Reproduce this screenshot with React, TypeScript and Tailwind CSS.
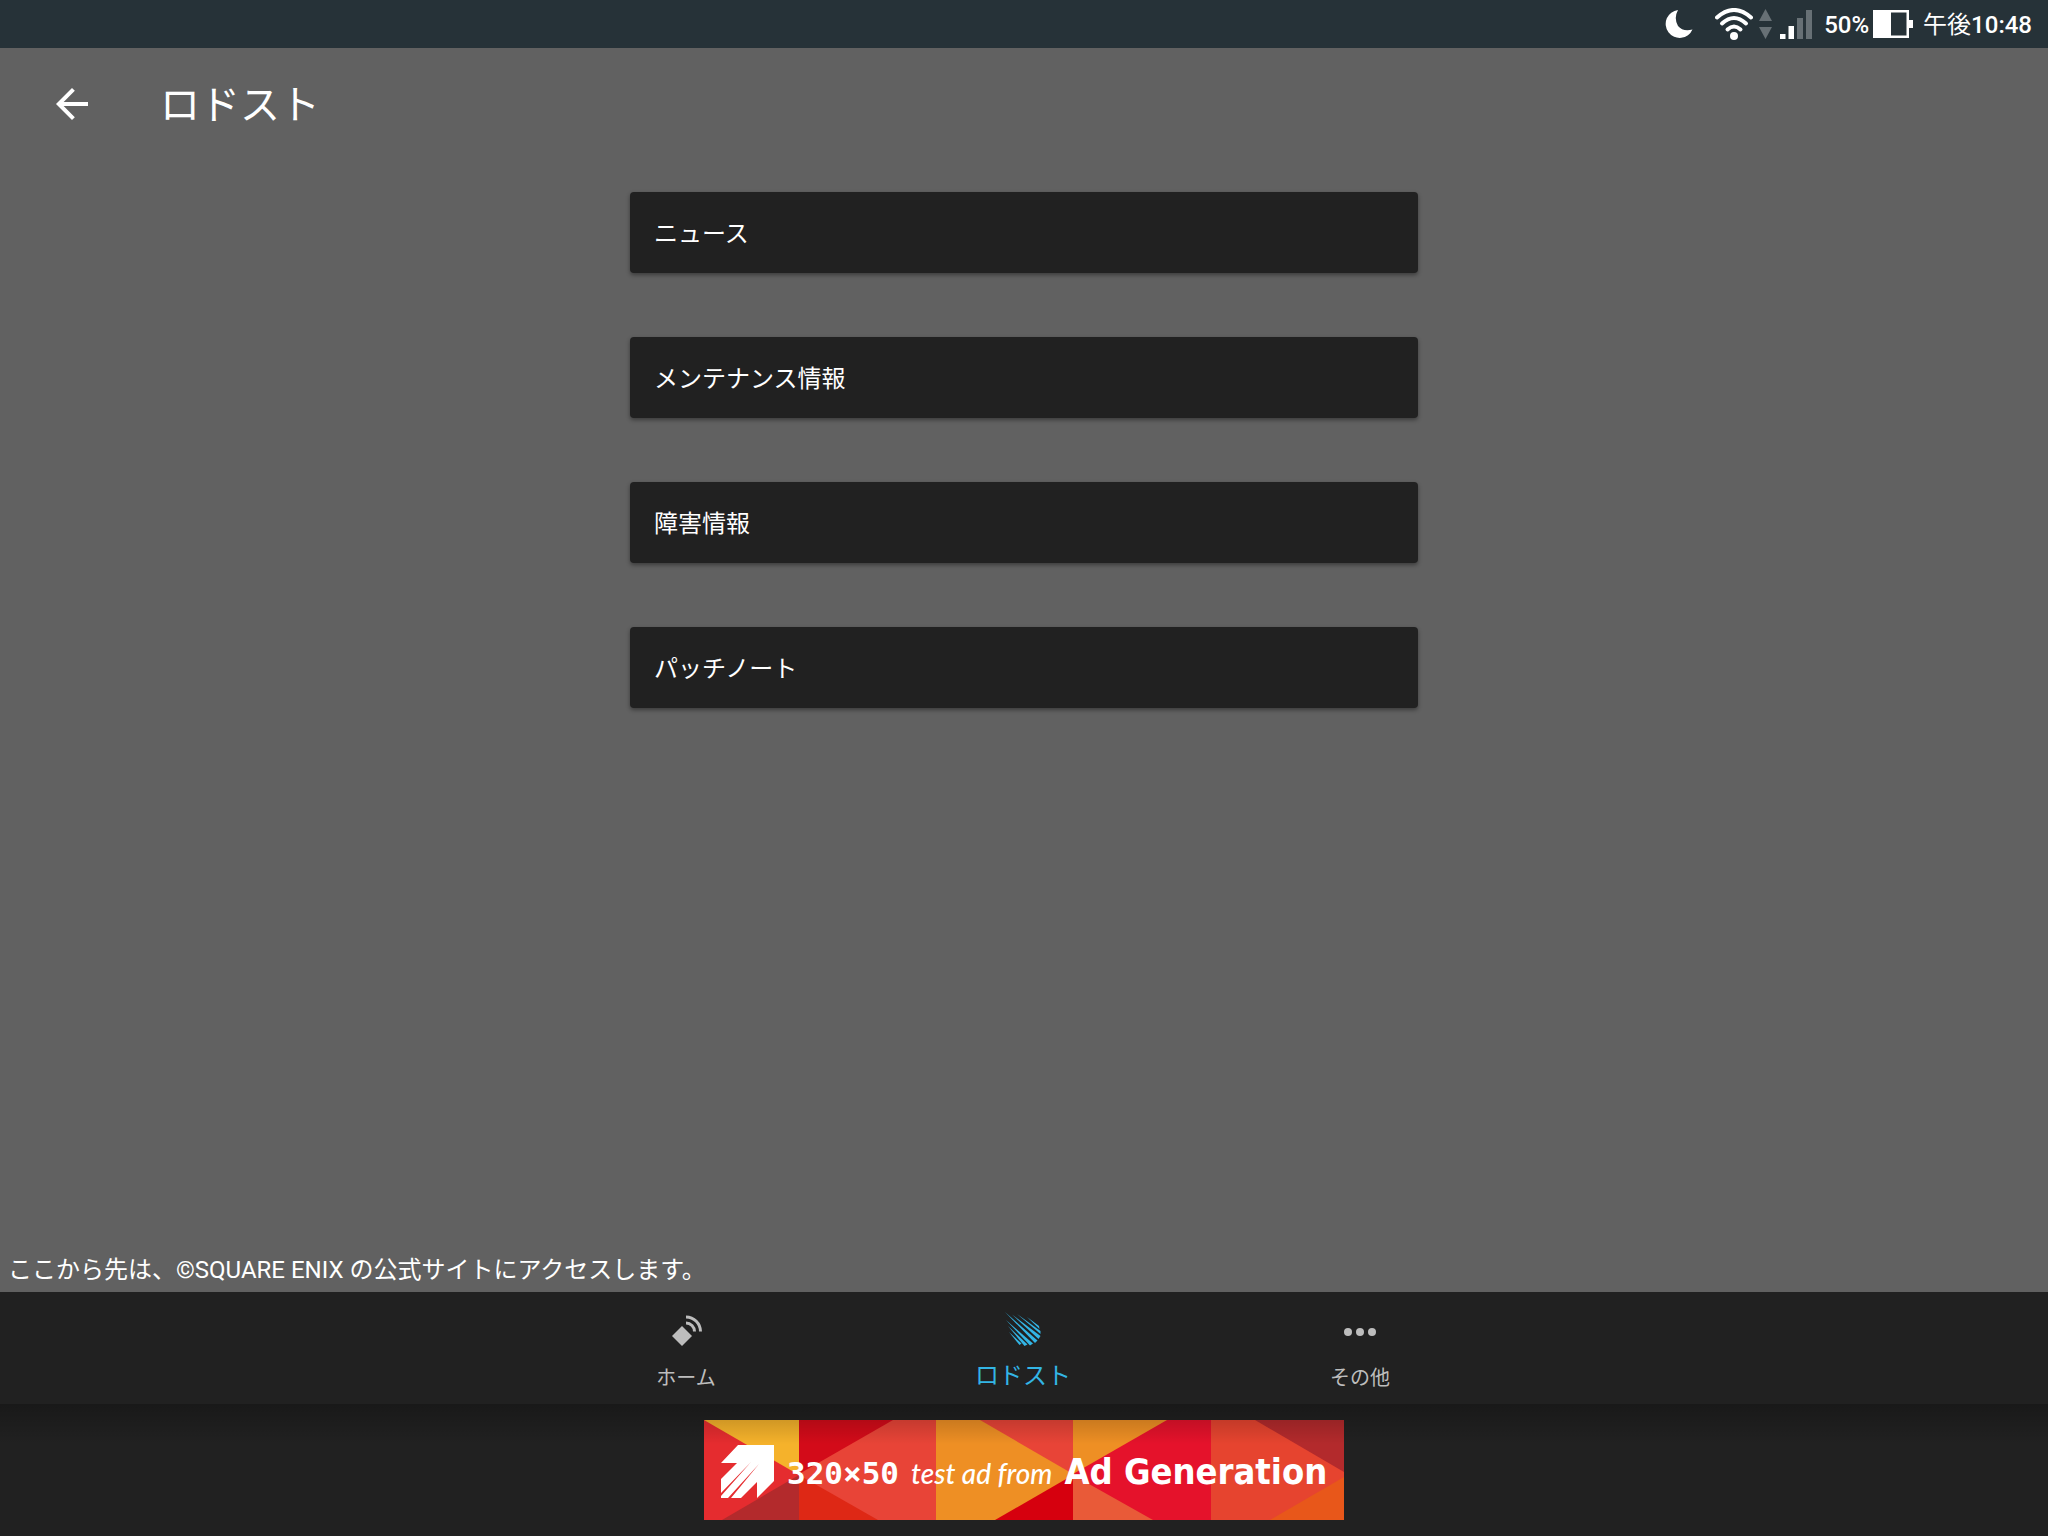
import React from "react";
import clsx from "clsx";

interface NavItem {
  label: string;
  icon: React.ReactNode;
  active?: boolean;
}

const LINKS = ["ニュース", "メンテナンス情報", "障害情報", "パッチノート"];

function MoonIcon() {
  return (
    <svg viewBox="0 0 28 28" className="size-7" fill="#fff">
      <path d="M13 0A14 14 0 1 0 27.500 19.500Q18 22 13 16Q8.500 8 13 0Z" />
    </svg>
  );
}

function WifiIcon() {
  return (
    <svg viewBox="0 0 38 32" className="h-8 w-[38px]" fill="none" stroke="#fff" strokeWidth="4" strokeLinecap="round">
      <path d="M2 9.500Q19 -5.500 36 9.500" />
      <path d="M7 15.500Q19 4.500 31 15.500" />
      <path d="M12.500 21.500Q19 15.500 25.500 21.500" />
      <circle cx="19" cy="28" r="4" fill="#fff" stroke="none" />
    </svg>
  );
}

function TrafficIcon() {
  return (
    <svg viewBox="0 0 13 30" className="h-[30px] w-[13px]" fill="#677075">
      <path d="M6.500 0L13 12H0ZM0 18H13L6.500 30Z" />
    </svg>
  );
}

function SignalIcon() {
  return (
    <svg viewBox="0 0 32 29" className="h-[29px] w-8">
      <path d="M0 24H5.500V29H0ZM8.500 16H14V29H8.500Z" fill="#fff" />
      <path d="M17 8H23V29H17ZM26 0H32V29H26Z" fill="#677075" />
    </svg>
  );
}

function BatteryIcon() {
  return (
    <svg viewBox="0 0 40 28" className="h-7 w-10" fill="#fff">
      <path fillRule="evenodd" d="M0 0H36V10H40V18H36V28H0ZM18 2.500V25.500H33.500V2.500Z" />
    </svg>
  );
}

function BackIcon() {
  return (
    <svg viewBox="4 4 16 16" className="size-8" fill="#fff">
      <path d="M20 11H7.830l5.590-5.590L12 4l-8 8 8 8 1.410-1.410L7.830 13H20z" />
    </svg>
  );
}

function HomeIcon() {
  return (
    <svg viewBox="0 0 36 36" className="size-9" fill="none" stroke="#bdbdbd" strokeWidth="3">
      <path d="M14 12L24 22L14 32L4 22Z" fill="#bdbdbd" stroke="none" />
      <path d="M18 9A8.500 8.500 0 0 1 26.500 17.500" />
      <path d="M18 3A14.500 14.500 0 0 1 32.500 17.500" />
    </svg>
  );
}

function MeteorIcon() {
  return (
    <svg viewBox="0 0 36 36" className="size-9" fill="#33b5e5">
      <path d="M22 5L34 14L34.500 17Z" />
      <path d="M12 2L35.500 19L35.500 22Z" />
      <path d="M7 2.500L35.500 24L33.500 27Z" />
      <path d="M0 0L32.500 28.500L30 31Z" />
      <path d="M1 8L28 31.500L25 33.500Z" />
      <path d="M3 14L22.500 32.500L19.500 34Z" />
      <path d="M4 20L16.500 31.500L14.500 33Z" />
    </svg>
  );
}

function MoreIcon() {
  return (
    <svg viewBox="0 0 36 36" className="size-9" fill="#bdbdbd">
      <circle cx="6" cy="18" r="4" />
      <circle cx="18" cy="18" r="4" />
      <circle cx="30" cy="18" r="4" />
    </svg>
  );
}

const NAV_ITEMS: NavItem[] = [
  { label: "ホーム", icon: <HomeIcon /> },
  { label: "ロドスト", icon: <MeteorIcon />, active: true },
  { label: "その他", icon: <MoreIcon /> },
];

function StatusBar() {
  return (
    <div className="flex h-12 items-center justify-end bg-[#263238] pr-4 text-2xl leading-8">
      <MoonIcon />
      <div className="ml-[22px] flex items-center gap-1.5">
        <WifiIcon />
        <TrafficIcon />
      </div>
      <div className="ml-2">
        <SignalIcon />
      </div>
      <span className="ml-3 pt-0.5 font-medium">50%</span>
      <div className="ml-1">
        <BatteryIcon />
      </div>
      <time className="ml-2.5 pt-0.5">
        午後<span className="font-medium">10:48</span>
      </time>
    </div>
  );
}

function BottomNav() {
  return (
    <nav className="flex h-28 justify-center bg-[#212121] pr-0.5">
      {NAV_ITEMS.map(({ label, icon, active }) => (
        <button
          key={label}
          className={clsx(
            "flex w-full max-w-[337px] flex-col items-center",
            active ? "pt-5 text-2xl text-[#33b5e5]" : "pt-[22px] text-xl text-[#bdbdbd]",
          )}
        >
          {icon}
          <span className="mt-2.5 leading-9">{label}</span>
        </button>
      ))}
    </nav>
  );
}

function AdBackground() {
  return (
    <svg viewBox="0 0 640 100" className="absolute inset-0 size-full" preserveAspectRatio="none">
      <path d="M0 0H95V100H0Z" fill="#e52c2f" />
      <path d="M0 0H95V55Z" fill="#f5b22b" />
      <path d="M95 55V100H18Z" fill="#b32a2c" />
      <path d="M95 0H232V100H95Z" fill="#e84437" />
      <path d="M95 0H189L95 54Z" fill="#d30b19" />
      <path d="M95 55L174 100H95Z" fill="#de2815" />
      <path d="M232 0H369V100H232Z" fill="#ee8f24" />
      <path d="M276 0H369V54Z" fill="#e84437" />
      <path d="M369 55V100H291Z" fill="#d6000e" />
      <path d="M369 0H507V100H369Z" fill="#e5122b" />
      <path d="M369 0H463L369 54Z" fill="#ee8f24" />
      <path d="M369 55L449 100H369Z" fill="#e95a38" />
      <path d="M507 0H640V100H507Z" fill="#e6442f" />
      <path d="M551 0H640V52Z" fill="#b32a2c" />
      <path d="M640 57V100H566Z" fill="#e8571a" />
    </svg>
  );
}

function AdLogo() {
  return (
    <svg viewBox="0 0 54 54" className="size-[54px] shrink-0" fill="#fff">
      <path
        fillRule="evenodd"
        d="M17 0H53V36L36 53V37L20 53H0V34L16 18H0ZM0 48V51L30 17ZM7 53H10L38 19Z"
      />
    </svg>
  );
}

function AdBanner() {
  return (
    <aside className="relative flex h-[132px] items-center justify-center bg-[#212121]">
      <a href="#ad" className="relative flex h-[100px] w-[640px] items-center overflow-hidden whitespace-nowrap">
        <AdBackground />
        <div className="relative flex items-center pt-1 pl-[17px]">
          <AdLogo />
          <span className="ml-3 flex items-baseline">
            <span className="font-['DejaVu_Sans_Mono'] text-[31px] font-bold">320×50</span>
            <span className="ml-3 font-[Lato] text-[28px] font-medium italic">test ad from</span>
            <span className="ml-3 font-['DejaVu_Sans_Condensed','DejaVu_Sans'] text-[36px] font-bold">Ad Generation</span>
          </span>
        </div>
      </a>
      <div className="pointer-events-none absolute inset-x-0 top-0 h-10 bg-linear-to-b from-black/25 to-transparent" />
    </aside>
  );
}

export default function App() {
  return (
    <div className="flex min-h-screen flex-col bg-[#616161] font-[Roboto,'Noto_Sans_CJK_JP',sans-serif] text-white">
      <StatusBar />

      <header className="flex h-28 items-center pl-14">
        <button aria-label="戻る">
          <BackIcon />
        </button>
        <h1 className="ml-[72px] pt-1 text-[40px] leading-[56px]">ロドスト</h1>
      </header>

      <main className="flex grow flex-col">
        <div className="mx-auto mt-8 flex w-full max-w-[788px] flex-col gap-16">
          {LINKS.map((label) => (
            <button
              key={label}
              className="h-[81px] rounded-sm bg-[#212121] px-6 pt-0.5 text-left text-2xl shadow-[0_2px_4px_rgba(0,0,0,0.4)]"
            >
              {label}
            </button>
          ))}
        </div>
        <p className="mt-auto px-2 pb-1.5 text-2xl leading-8">
          ここから先は、©SQUARE ENIX の公式サイトにアクセスします。
        </p>
      </main>

      <BottomNav />
      <AdBanner />
    </div>
  );
}
